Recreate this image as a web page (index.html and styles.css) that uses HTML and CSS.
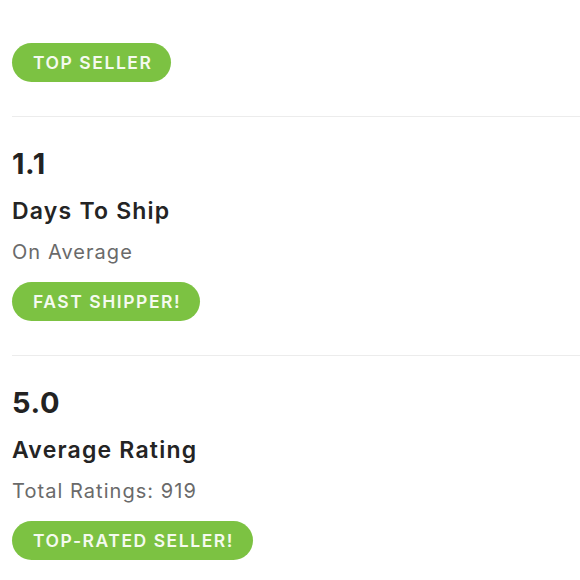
FILE: index.html
```html
<!DOCTYPE html>
<html>
<head>
<meta charset="utf-8">
<link rel="stylesheet" href="styles.css">
</head>
<body>
<div class="stats">
  <section class="stat stat-first">
    <span class="pill">TOP SELLER</span>
  </section>
  <section class="stat">
    <div class="num">1.1</div>
    <div class="title">Days To Ship</div>
    <div class="sub">On Average</div>
    <span class="pill">FAST SHIPPER!</span>
  </section>
  <section class="stat">
    <div class="num">5.0</div>
    <div class="title">Average Rating</div>
    <div class="sub">Total Ratings: 919</div>
    <span class="pill">TOP-RATED SELLER!</span>
  </section>
</div>
</body>
</html>
```
FILE: styles.css
```css
html, body {
  margin: 0;
  padding: 0;
  background: #ffffff;
}
body {
  font-family: Inter, Lato, sans-serif;
  color: #222222;
}
.stats {
  display: flex;
  flex-direction: column;
}
.stat {
  display: flex;
  flex-direction: column;
  align-items: flex-start;
  margin-left: 12px;
  padding: 30px 0 34px 0;
  border-top: 1px solid #ececec;
}
.stat-first {
  border-top: none;
  padding-top: 43px;
}
.num {
  font-size: 29px;
  line-height: 34px;
  font-weight: 700;
  letter-spacing: 0.6px;
  color: #222222;
}
.title {
  margin-top: 16px;
  font-size: 23px;
  line-height: 28px;
  font-weight: 600;
  letter-spacing: 1.2px;
  color: #242424;
}
.sub {
  margin-top: 15px;
  font-size: 20px;
  line-height: 24px;
  letter-spacing: 1.05px;
  color: #6a6a6a;
}
.pill {
  margin-top: 18px;
  display: inline-block;
  height: 39px;
  line-height: 39px;
  padding: 0 19px 0 21px;
  border-radius: 20px;
  background: #7cc242;
  color: #f5faef;
  font-size: 17.5px;
  font-weight: 600;
  letter-spacing: 1.55px;
}
.stat-first .pill {
  margin-top: 0;
}
```
